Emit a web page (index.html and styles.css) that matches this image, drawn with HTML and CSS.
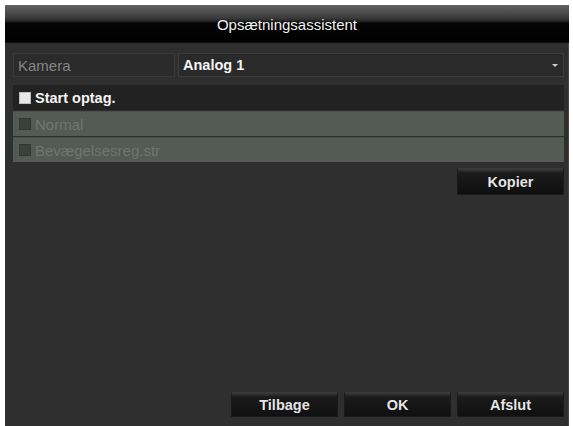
FILE: index.html
```html
<!DOCTYPE html>
<html>
<head>
<meta charset="utf-8">
<link rel="stylesheet" href="styles.css">
</head>
<body>
<div class="panel">
  <div class="titlebar"><span class="title">Opsætningsassistent</span></div>
  <div class="content">
    <div class="row-camera">
      <div class="label-cell">Kamera</div>
      <div class="value-cell"><span>Analog 1</span><span class="arrow"></span></div>
    </div>
    <div class="row-start">
      <span class="check check-on"></span><span>Start optag.</span>
    </div>
    <div class="row-sub">
      <span class="check check-off"></span><span>Normal</span>
    </div>
    <div class="row-sub">
      <span class="check check-off"></span><span>Bevægelsesreg.str</span>
    </div>
    <div class="copy-line">
      <button class="btn">Kopier</button>
    </div>
    <div class="spacer"></div>
    <div class="footer">
      <button class="btn">Tilbage</button>
      <button class="btn">OK</button>
      <button class="btn">Afslut</button>
    </div>
  </div>
</div>
</body>
</html>
```
FILE: styles.css
```css
html, body {
  margin: 0;
  padding: 0;
  background: #ffffff;
  width: 573px;
  height: 426px;
  overflow: hidden;
  font-family: "Liberation Sans", Arial, sans-serif;
}
.panel {
  margin: 5px 0 0 5px;
  width: 564px;
  height: 421px;
  background: #2f2f2f;
  display: flex;
  flex-direction: column;
  box-shadow: inset -1px 0 0 #444;
}
.titlebar {
  height: 38px;
  background: linear-gradient(to bottom, #626262 0px, #4e4e4e 7px, #3a3a3a 13px, #262626 16px, #050505 18px, #000 37px, #1c1c1c 38px);
  display: flex;
  justify-content: center;
  align-items: flex-start;
  flex-shrink: 0;
}
.title {
  color: #f2f2f2;
  font-size: 15px;
  margin-top: 11px;
  text-shadow: 0 0 2px rgba(0,0,0,0.6);
}
.content {
  flex: 1;
  display: flex;
  flex-direction: column;
  padding: 10px 5px 9px 8px;
}
.row-camera {
  display: flex;
  height: 24px;
  gap: 3px;
}
.label-cell {
  width: 162px;
  background: #2b2b2b;
  border: 1px solid #3a3a3a;
  box-sizing: border-box;
  color: #858585;
  font-size: 15px;
  display: flex;
  align-items: center;
  padding-left: 4px;
}
.value-cell {
  flex: 1;
  background: #2a2a2a;
  border: 1px solid #3c3c3c;
  box-sizing: border-box;
  color: #f4f4f4;
  font-weight: bold;
  font-size: 14.5px;
  display: flex;
  align-items: center;
  justify-content: space-between;
  padding: 0 5px 0 4px;
}
.arrow {
  width: 0;
  height: 0;
  border-left: 3px solid transparent;
  border-right: 3px solid transparent;
  border-top: 3px solid #cfcfcf;
}
.row-start {
  margin-top: 8px;
  height: 25px;
  background: #222222;
  display: flex;
  align-items: center;
  color: #f4f4f4;
  font-weight: bold;
  font-size: 14.5px;
  padding-left: 6px;
  gap: 4px;
}
.check {
  width: 12px;
  height: 12px;
  display: inline-block;
  box-sizing: border-box;
}
.check-on {
  background: #e8e8e8;
  border: 1px solid #bbbbbb;
}
.check-off {
  background: #3b403b;
  border: 1px solid #333833;
}
.row-sub {
  margin-top: 1px;
  height: 25px;
  background: #545a54;
  border-top: 1px solid #4a4f4a;
  box-sizing: border-box;
  display: flex;
  align-items: center;
  color: #6f776f;
  font-size: 15px;
  padding-left: 6px;
  gap: 4px;
}
.copy-line {
  display: flex;
  justify-content: flex-end;
  margin-top: 6px;
}
.btn {
  width: 107px;
  height: 27px;
  border: 1px solid #1a1a1a;
  border-top-color: #3a3a3a;
  background: linear-gradient(to bottom, #3a3a3a 0px, #1b1b1b 4px, #141414 16px, #0e0e0e 27px);
  color: #e6e6e6;
  font-family: "Liberation Sans", Arial, sans-serif;
  font-weight: bold;
  font-size: 14.5px;
  padding: 0;
  margin: 0;
  text-shadow: 0 0 1px #000;
}
.spacer {
  flex: 1;
}
.footer {
  display: flex;
  justify-content: flex-end;
  gap: 6px;
}
.footer .btn {
  height: 25px;
}
```
